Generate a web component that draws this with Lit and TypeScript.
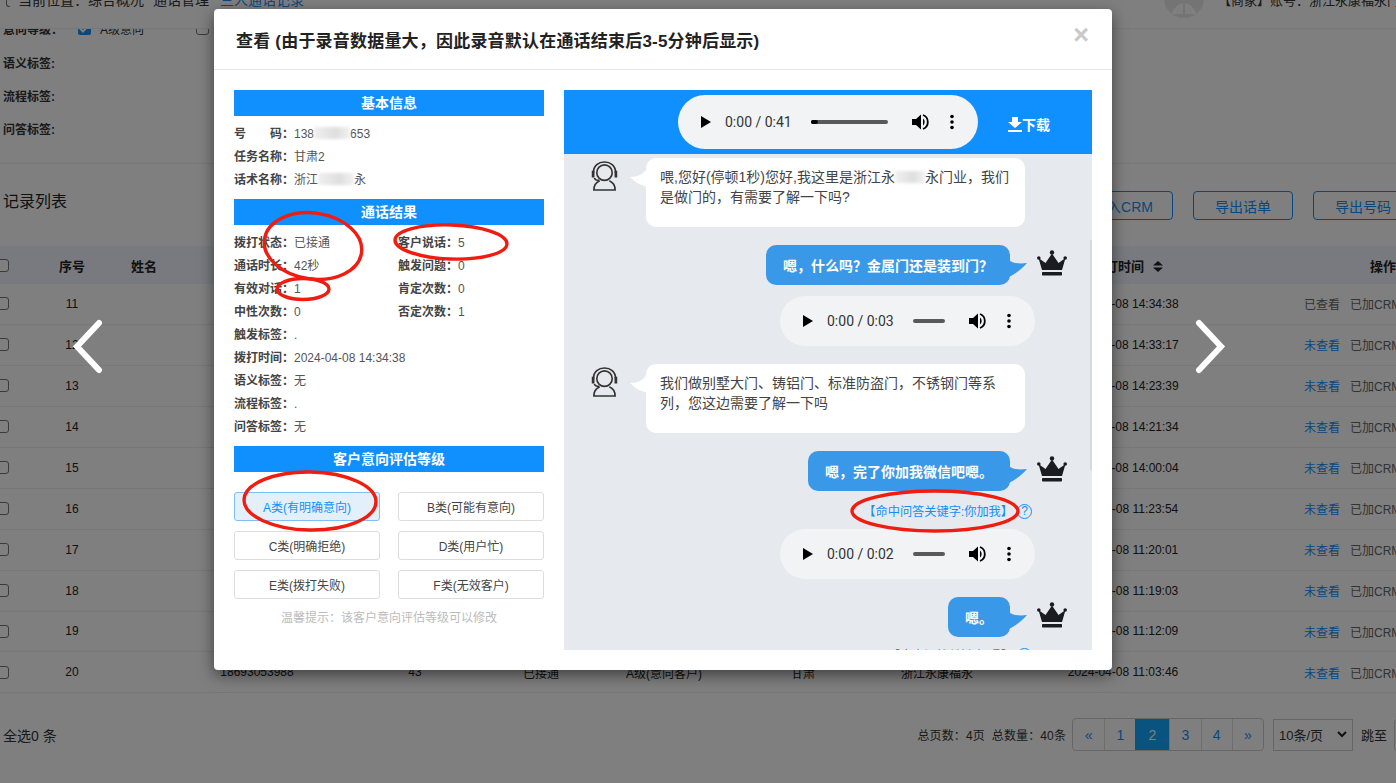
import { LitElement, html, css, svg } from "lit";
import { customElement } from "lit/decorators.js";

const FONT = css`"Liberation Sans", "Noto Sans CJK SC", sans-serif`;

const rowsData: any[] = [
  { n: 11, t: "14:34:38", seen: true },
  { n: 12, t: "14:33:17" },
  { n: 13, t: "14:23:39" },
  { n: 14, t: "14:21:34" },
  { n: 15, t: "14:00:04" },
  { n: 16, t: "11:23:54" },
  { n: 17, t: "11:20:01" },
  { n: 18, t: "11:19:03" },
  { n: 19, t: "11:12:09" },
  { n: 20, t: "11:03:46", phone: "18693053988", count: "43", status: "已接通", level: "A级(意向客户)", task: "甘肃", script: "浙江永康福永" },
];

const play = svg`<svg class="play" viewBox="0 0 10 12" width="10" height="12"><path d="M0 0 L10 6 L0 12 Z" fill="#000"/></svg>`;
const vol = svg`<svg class="vol" viewBox="0 0 18 18" width="18" height="18"><path d="M1 6 H5 L10 1.5 V16.5 L5 12 H1 Z" fill="#000"/><path d="M12 5.5 A4.5 4.5 0 0 1 12 12.5 Z" fill="#000"/><path d="M12 2 A7.5 7.5 0 0 1 12 16" fill="none" stroke="#000" stroke-width="1.8"/></svg>`;
const dots = svg`<svg class="dots" viewBox="0 0 4 16" width="4" height="16"><circle cx="2" cy="2.5" r="1.8" fill="#000"/><circle cx="2" cy="8" r="1.8" fill="#000"/><circle cx="2" cy="13.5" r="1.8" fill="#000"/></svg>`;
const agent = svg`<svg class="avatar" viewBox="0 0 28 31" width="27" height="30" fill="none" stroke="#333" stroke-width="1.7"><circle cx="14" cy="12" r="8"/><path d="M2.5 12 C2.5 4.5 8 1 14 1 C20 1 25.5 4.5 25.5 12"/><path d="M2.2 10 V17 M25.8 10 V17" stroke-width="2.8"/><path d="M3.5 17.5 C4 19 6 20 8.5 20"/><path d="M9 20.5 C5.5 22 3 25 3 30 H25 C25 25 22.5 22 19 20.5"/></svg>`;
const crown = svg`<svg class="crown" viewBox="0 0 30 27" width="30" height="27" fill="#1b1b22"><circle cx="15" cy="2.4" r="2.2"/><circle cx="1.8" cy="8" r="1.8"/><circle cx="28.2" cy="8" r="1.8"/><path d="M1.5 8 L8.5 13 L15 3.5 L21.5 13 L28.5 8 L25 20 H5 Z"/><rect x="5" y="22" width="20" height="3.6" rx="0.8"/></svg>`;
const tailL = svg`<svg class="tail-l" viewBox="0 0 17 20" width="17" height="20"><path d="M17 0 C14 6 8 9 0 9 C5 14 10 17 17 19 Z" fill="#fff"/></svg>`;
const tailR = svg`<svg class="tail-r" viewBox="0 0 18 18" width="18" height="18"><path d="M0 0 C3 3 9 4 18 3 C13 9 6 14 0 17 Z" fill="#3a98e8"/></svg>`;

@customElement("app-root")
export class AppRoot extends LitElement {
  static styles = css`
    :host { display: block; width: 1396px; height: 783px; position: relative; overflow: hidden; background: #fff; font-family: ${FONT}; font-size: 12px; color: #222; }
    * { box-sizing: border-box; }
    .page { width: 1396px; height: 783px; overflow: hidden; }
    .top { height: 29px; border-bottom: 1px solid #eee; display: flex; overflow: hidden; position: relative; }
    .crumb { display: flex; gap: 9px; font-size: 14px; line-height: 16px; margin-top: -8px; padding-left: 6px; color: #333; white-space: nowrap; }
    .crumb .cb { margin-top: 2px; margin-left: 0; margin-right: -1px; width: 4px; border-left-width: 1px; border-right: 0; border-radius: 3px 0 0 3px; }
    .crumb .now { color: #1090ff; margin-left: 2px; }
    .user { margin-left: auto; display: flex; gap: 14px; align-items: flex-start; white-space: nowrap; font-size: 13px; line-height: 16px; width: 232px; overflow: hidden; }
    .user-av { width: 40px; height: 40px; border-radius: 50%; background: #e8e8e8; margin-top: -22px; flex: none; display: flex; justify-content: center; align-items: flex-end; padding-bottom: 3px; }
    .user-tx { margin-top: -7px; color: #333; }
    .filters { height: 135px; border-bottom: 1px solid #eee; overflow: hidden; padding-left: 3px; }
    .f-row { height: 33.4px; display: flex; align-items: center; font-weight: 700; color: #333; }
    .f-row:first-child { margin-top: -17px; }
    .f-row .cb-on { width: 13px; height: 13px; border-radius: 2px; background: #1090ff; margin-left: 15px; flex: none; display: flex; align-items: center; justify-content: center; }
    .f-row .lbl { font-weight: 400; margin-left: 9px; width: 96px; }
    .toolbar { height: 82px; display: flex; padding: 27px 0 0 3px; }
    .toolbar h2 { margin: 1px 0 0; font-size: 16px; font-weight: 400; line-height: 20px; color: #222; }
    .tb-btns { margin-left: auto; margin-right: -17px; display: flex; gap: 20px; }
    .tb-btn { width: 100px; height: 29px; border: 1px solid #1090ff; border-radius: 4px; color: #1090ff; font-size: 14px; display: flex; align-items: center; justify-content: center; }
    .grid { display: grid; grid-template-columns: 36px 72px 72px 154px 162px 90px 156px 122px 146px 226px 294px; width: 1530px; align-items: center; }
    .grid > span { text-align: center; white-space: nowrap; }
    .thead { height: 38px; background: #f0f4ff; font-size: 13px; font-weight: 700; }
    .row { height: 40.95px; border-bottom: 1px solid #eee; color: #222; }
    .cb { display: block; width: 13px; height: 13px; border: 1px solid #777; border-radius: 3px; background: #fff; margin-left: -4px; flex: none; }
    .grid > .time-h { padding-left: 9px; }
    .sort { display: inline-block; vertical-align: -1px; margin-left: 9px; }
    .grid > .ops { display: flex; gap: 10px; padding-left: 68px; }
    .ops .go { color: #1090ff; }
    .ops .seen, .ops .crm { color: #666; }
    .footer { display: flex; align-items: center; padding: 25px 0 0 3px; }
    .footer .all { font-size: 14px; color: #333; }
    .pager { margin-left: auto; margin-right: -28px; display: flex; align-items: center; }
    .stats { color: #333; white-space: pre; margin-right: 6px; letter-spacing: .13px; }
    .pages { display: flex; height: 33px; border: 1px solid #ccc; border-radius: 4px; margin-right: 9px; }
    .pages span { width: 31.2px; display: flex; align-items: center; justify-content: center; font-size: 14px; color: #1090ff; border-left: 1px solid #ddd; }
    .pages span:first-child { border-left: 0; }
    .pages .on { background: #10a8ff; color: #fff; width: 34px; border-left: 0; }
    .select { width: 80px; height: 32px; border: 1px solid #ccc; display: flex; align-items: center; justify-content: space-between; padding: 0 5px; font-size: 13px; color: #333; }
    .jump { font-size: 13px; margin: 0 7px 0 8px; color: #333; }
    .jump-in { width: 30px; height: 32px; border: 1px solid #ccc; border-radius: 3px; }

    .overlay { position: absolute; inset: 0; background: rgba(0,0,0,.5); }
    .arrow { position: absolute; top: 319px; }
    .arrow.l { left: 72px; } .arrow.r { left: 1193px; }
    .modal { position: absolute; left: 214px; top: 9px; width: 898px; height: 661px; background: #fff; border-radius: 4px; box-shadow: 0 5px 15px rgba(0,0,0,.5); overflow: hidden; }
    .m-head { height: 61px; border-bottom: 1px solid #e5e5e5; display: flex; align-items: center; padding: 0 23px 0 22px; }
    .m-head h1 { margin: 0; font-size: 17px; letter-spacing: .2px; font-weight: 700; color: #222; }
    .close { margin-left: auto; margin-top: -8px; font-size: 27px; font-weight: 700; line-height: 27px; color: #c9c9c9; }
    .m-body { display: flex; gap: 20px; padding: 20px 20px 0; }
    .left { width: 310px; flex: none; }
    .bar { height: 26px; background: #1090ff; color: #fff; font-size: 14px; font-weight: 700; display: flex; align-items: center; justify-content: center; padding-bottom: 2px; }
    .info { padding: 7px 0 7px; display: grid; grid-template-columns: 164px 146px; color: #555; }
    .info > div { height: 23px; line-height: 23px; white-space: nowrap; display: flex; }
    .info .wide { grid-column: 1 / 3; }
    .info b { font-weight: 700; color: #444; width: 60px; flex: none; }
    .info b.just { display: flex; justify-content: space-between; }
    .blur { display: inline-block; height: 12px; vertical-align: -1px; background: linear-gradient(90deg,#f0f0f0,#dedede 60%,#f2f2f2); filter: blur(1.5px); }
    .levels { display: grid; grid-template-columns: 146px 146px; gap: 10px 18px; margin-top: 20px; }
    .lv { height: 29px; border: 1px solid #ddd; border-radius: 3px; display: flex; align-items: center; justify-content: center; color: #444; }
    .lv.on { background: #e3f0fa; border-color: #7cc0f5; color: #1090ff; }
    .hint { margin-top: 10px; line-height: 18px; text-align: center; color: #bbb; }

    .right { width: 528px; flex: none; }
    .r-head { height: 64px; background: #1090ff; display: flex; padding: 5px 0 0 114px; position: relative; }
    .audio { display: flex; align-items: center; background: #f1f3f4; border-radius: 27px; padding: 0 24px 0 23px; height: 54px; width: 300px; flex: none; font-family: Roboto, ${FONT}; font-size: 14px; color: #333; }
    .audio.small { height: 50px; width: 255px; border-radius: 25px; }
    .play { flex: none; margin-right: 14px; }
    .time { width: 70px; flex: none; white-space: nowrap; margin-right: 16px; }
    .track { flex: 1; height: 4px; border-radius: 2px; background: #595959; margin-right: 23px; position: relative; }
    .track i { position: absolute; left: 0; top: 0; bottom: 0; width: 7px; background: #000; border-radius: 2px; }
    .vol { flex: none; margin-right: 21px; }
    .dots { flex: none; }
    .dl { margin: 20px 0 0 30px; color: #fff; font-size: 14px; font-weight: 700; display: flex; align-items: center; height: 18px; white-space: nowrap; }
    .chat { height: 496px; background: #e6e9ed; overflow: hidden; position: relative; padding-top: 4px; display: flex; flex-direction: column; }
    .thumb { position: absolute; right: 0; top: 86px; width: 2px; height: 230px; background: #d6d9dd; }
    .msg-l { display: flex; padding-left: 27px; flex: none; }
    .avatar { margin-top: 3px; flex: none; margin-right: 28px; }
    .bub-l { width: 379px; height: 69px; background: #fff; border-radius: 10px; padding: 9px 14px; font-size: 14px; line-height: 20px; color: #444; position: relative; }
    .tail-l { position: absolute; left: -16px; top: 10px; }
    .msg-r { display: flex; justify-content: flex-end; padding-right: 25px; flex: none; }
    .bub-r { height: 40px; background: #3a98e8; border-radius: 10px; padding: 0 17px; font-size: 14px; font-weight: 700; color: #fff; display: flex; align-items: center; position: relative; margin-right: 27px; white-space: nowrap; }
    .tail-r { position: absolute; right: -17px; top: 15px; }
    .crown { margin-top: 5px; flex: none; }
    .aud-r { display: flex; justify-content: flex-end; padding-right: 57px; flex: none; }
    .kw { display: flex; justify-content: flex-end; align-items: center; padding-right: 60px; height: 20px; color: #1090ff; font-size: 12.2px; flex: none; white-space: nowrap; }
    .q { width: 15px; height: 15px; border: 1.5px solid #1090ff; border-radius: 50%; font-size: 12px; line-height: 12px; text-align: center; margin-left: 4px; flex: none; }
    .m18 { margin-top: 18px; } .m11 { margin-top: 11px; } .m10 { margin-top: 10px; } .m8 { margin-top: 8px; }
    .marks { position: absolute; left: 0; top: 0; pointer-events: none; }
  `;

  private audio(time: string, small: boolean, progress = false) {
    return html`<div class="audio ${small ? "small" : ""}">
      ${play}<span class="time">${time}</span>
      <div class="track">${progress ? html`<i></i>` : ""}</div>
      ${vol}${dots}
    </div>`;
  }

  private info(label: string, value: unknown, wide = false) {
    return html`<div class=${wide ? "wide" : ""}><b>${label}：</b><span>${value}</span></div>`;
  }

  render() {
    return html`
      <div class="page">
        <div class="top">
          <div class="crumb"><span class="cb"></span><span>当前位置：综合概况</span><span>通话管理</span><span class="now">三人通话记录</span></div>
          <div class="user">
            <div class="user-av"><svg width="24" height="12" viewBox="0 0 24 12"><path d="M11 0 C6 1 1 5 0 11 H11 Z M13 0 C18 1 23 5 24 11 H13 Z" fill="#fff"/></svg></div>
            <span class="user-tx">【商家】账号：浙江永康福永门业有限公司</span>
          </div>
        </div>
        <div class="filters">
          <div class="f-row"><span>意向等级：</span><span class="cb-on"><svg width="11" height="9" viewBox="0 0 11 9"><path d="M1 4.5 L4 7.5 L10 1" fill="none" stroke="#fff" stroke-width="2"/></svg></span><span class="lbl">A级意向</span><span class="cb" style="margin-left:0"></span></div>
          <div class="f-row">语义标签:</div>
          <div class="f-row">流程标签:</div>
          <div class="f-row">问答标签:</div>
        </div>
        <div class="toolbar">
          <h2>记录列表</h2>
          <div class="tb-btns"><div class="tb-btn">导入CRM</div><div class="tb-btn">导出话单</div><div class="tb-btn">导出号码</div></div>
        </div>
        <div class="grid thead">
          <span class="cb"></span><span>序号</span><span>姓名</span><span>号码</span><span>通话时长</span><span>状态</span><span>意向等级</span><span>任务</span><span>话术</span>
          <span class="time-h">拨打时间<svg class="sort" width="10" height="11" viewBox="0 0 10 11"><path d="M5 0 L10 4.5 H0 Z M0 6.5 H10 L5 11 Z" fill="#222"/></svg></span><span>操作</span>
        </div>
        ${rowsData.map(r => html`
          <div class="grid row">
            <span class="cb"></span><span>${r.n}</span><span></span><span>${r.phone ?? ""}</span><span>${r.count ?? ""}</span><span>${r.status ?? ""}</span><span>${r.level ?? ""}</span><span>${r.task ?? ""}</span><span>${r.script ?? ""}</span>
            <span>2024-04-08 ${r.t}</span>
            <span class="ops">${r.seen ? html`<span class="seen">已查看</span>` : html`<span class="go">未查看</span>`}<span class="crm">已加CRM</span></span>
          </div>`)}
        <div class="footer">
          <span class="all">全选0 条</span>
          <div class="pager">
            <span class="stats">总页数：4页  总数量：40条</span>
            <div class="pages"><span>«</span><span>1</span><span class="on">2</span><span>3</span><span>4</span><span>»</span></div>
            <div class="select"><span>10条/页</span><svg width="10" height="7" viewBox="0 0 10 7"><path d="M1 1 L5 5 L9 1" fill="none" stroke="#222" stroke-width="2"/></svg></div>
            <span class="jump">跳至</span><div class="jump-in"></div>
          </div>
        </div>
      </div>

      <div class="overlay"></div>
      <svg class="arrow l" width="33" height="55" viewBox="0 0 33 55"><path d="M27 4 L5 27.5 L27 51" fill="none" stroke="#fff" stroke-width="6" stroke-linecap="round" stroke-linejoin="miter"/></svg>
      <svg class="arrow r" width="33" height="55" viewBox="0 0 33 55"><path d="M6 4 L28 27.5 L6 51" fill="none" stroke="#fff" stroke-width="6" stroke-linecap="round" stroke-linejoin="miter"/></svg>

      <div class="modal">
        <div class="m-head"><h1>查看 (由于录音数据量大，因此录音默认在通话结束后3-5分钟后显示)</h1><span class="close">×</span></div>
        <div class="m-body">
          <div class="left">
            <div class="bar">基本信息</div>
            <div class="info">
              <div class="wide"><b class="just"><span>号</span><span>码：</span></b><span>138<i class="blur" style="width:36px"></i>653</span></div>
              ${this.info("任务名称", "甘肃2", true)}
              <div class="wide"><b>话术名称：</b><span>浙江<i class="blur" style="width:36px"></i>永</span></div>
            </div>
            <div class="bar">通话结果</div>
            <div class="info">
              ${this.info("拨打状态", "已接通")}${this.info("客户说话", "5")}
              ${this.info("通话时长", "42秒")}${this.info("触发问题", "0")}
              ${this.info("有效对话", "1")}${this.info("肯定次数", "0")}
              ${this.info("中性次数", "0")}${this.info("否定次数", "1")}
              ${this.info("触发标签", ".", true)}
              ${this.info("拨打时间", "2024-04-08 14:34:38", true)}
              ${this.info("语义标签", "无", true)}
              ${this.info("流程标签", ".", true)}
              ${this.info("问答标签", "无", true)}
            </div>
            <div class="bar">客户意向评估等级</div>
            <div class="levels">
              <div class="lv on">A类(有明确意向)</div><div class="lv">B类(可能有意向)</div>
              <div class="lv">C类(明确拒绝)</div><div class="lv">D类(用户忙)</div>
              <div class="lv">E类(拨打失败)</div><div class="lv">F类(无效客户)</div>
            </div>
            <div class="hint">温馨提示：该客户意向评估等级可以修改</div>
          </div>
          <div class="right">
            <div class="r-head">
              ${this.audio("0:00 / 0:41", false, true)}
              <div class="dl"><svg width="14" height="15" viewBox="0 0 14 15"><path d="M4 0 H10 V5 H14 L7 11 L0 5 H4 Z M0 13 H14 V15 H0 Z" fill="#fff"/></svg>下载</div>
            </div>
            <div class="chat">
              <div class="msg-l">${agent}<div class="bub-l">${tailL}喂,您好(停顿1秒)您好,我这里是浙江永<i class="blur" style="width:30px"></i>永门业，我们是做门的，有需要了解一下吗?</div></div>
              <div class="msg-r m18"><div class="bub-r">嗯，什么吗？金属门还是装到门？${tailR}</div>${crown}</div>
              <div class="aud-r m11">${this.audio("0:00 / 0:03", true)}</div>
              <div class="msg-l m18">${agent}<div class="bub-l">${tailL}我们做别墅大门、铸铝门、标准防盗门，不锈钢门等系列，您这边需要了解一下吗</div></div>
              <div class="msg-r m18"><div class="bub-r">嗯，完了你加我微信吧嗯。${tailR}</div>${crown}</div>
              <div class="kw m10">【命中问答关键字:你加我】<span class="q">?</span></div>
              <div class="aud-r m8">${this.audio("0:00 / 0:02", true)}</div>
              <div class="msg-r m18"><div class="bub-r">嗯。${tailR}</div>${crown}</div>
              <div class="kw m8">【命中问答关键字:嗯】<span class="q">?</span></div>
              <div class="thumb"></div>
            </div>
          </div>
        </div>
      </div>

      <svg class="marks" width="1396" height="783" fill="none" stroke="#f01c10" stroke-width="3.4">
        <ellipse cx="313" cy="246" rx="49" ry="33" transform="rotate(8 313 246)"/>
        <ellipse cx="451" cy="242" rx="56" ry="17" transform="rotate(2 451 242)"/>
        <ellipse cx="303" cy="289" rx="26" ry="10.5"/>
        <ellipse cx="310" cy="501" rx="66" ry="29" transform="rotate(1 310 501)"/>
        <ellipse cx="935" cy="511" rx="83" ry="20"/>
      </svg>
    `;
  }
}
